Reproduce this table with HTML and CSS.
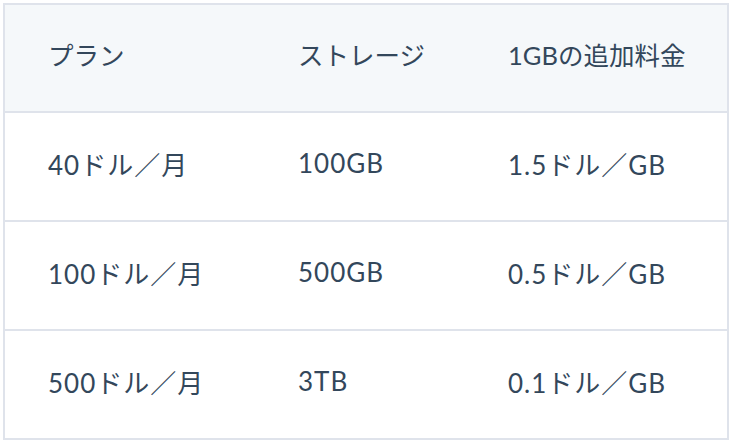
FILE: index.html
```html
<!DOCTYPE html>
<html lang="ja">
<head>
<meta charset="utf-8">
<link rel="stylesheet" href="styles.css">
</head>
<body>
<table class="pricing">
  <thead>
    <tr><th class="c1">プラン</th><th class="c2">ストレージ</th><th class="c3">1GBの追加料金</th></tr>
  </thead>
  <tbody>
    <tr><td>40ドル／月</td><td>100GB</td><td>1.5ドル／GB</td></tr>
    <tr><td>100ドル／月</td><td>500GB</td><td>0.5ドル／GB</td></tr>
    <tr><td>500ドル／月</td><td>3TB</td><td>0.1ドル／GB</td></tr>
  </tbody>
</table>
</body>
</html>
```
FILE: styles.css
```css
html, body { margin: 0; padding: 0; background: #fff; }
body { padding: 3px 0 0 3px; }
.pricing {
  width: 726px;
  border-collapse: collapse;
  border: 2px solid #dfe3eb;
  font-family: "Lato", "Noto Sans CJK JP", sans-serif;
  font-size: 26px;
  color: #33475b;
  table-layout: fixed;
}
.pricing th, .pricing td {
  text-align: left;
  font-weight: 400;
  padding: 0 0 7px 43px;
  border-bottom: 2px solid #dfe3eb;
  white-space: nowrap;
}
.pricing th { font-size: 25.5px; padding-bottom: 10px; }
.pricing td { letter-spacing: 1px; }
.pricing thead tr { height: 108px; background: #f5f8fa; }
.pricing tbody tr { height: 109px; }
.c1 { width: 207px; }
.c2 { width: 167px; }
```
